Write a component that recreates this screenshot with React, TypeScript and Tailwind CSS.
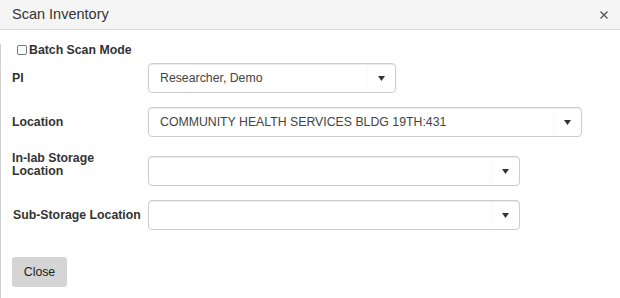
import React from "react";

function Select({ value, width }: { value?: string; width: string }) {
  return (
    <div
      className={`relative flex h-[30px] items-center rounded-[4px] border border-[#cccccc] bg-white shadow-[inset_0_1px_1px_rgba(0,0,0,0.08)] ${width}`}
    >
      <span className="pl-[11px] text-[12.3px] text-[#444]">{value}</span>
      <div className="absolute right-0 top-[2px] bottom-[2px] flex w-[28px] items-center justify-center border-l border-[#f9f9f9]">
        <svg width="7" height="5" viewBox="0 0 7 5">
          <path d="M0 0 L7 0 L3.5 5 Z" fill="#333" />
        </svg>
      </div>
    </div>
  );
}

export default function App() {
  return (
    <div
      className="w-[620px] h-[298px] overflow-hidden bg-white text-[#333]"
      style={{ fontFamily: '"Liberation Sans", Arial, sans-serif' }}
    >
      <div className="flex h-[30px] items-center justify-between border-b border-[#dcdcdc] bg-[#f5f5f5] pl-[12px] pr-[12px]">
        <span className="text-[14.5px] text-[#333]">Scan Inventory</span>
        <svg width="8" height="8" viewBox="0 0 8 8">
          <path d="M0.5 0.5 L7.5 7.5 M7.5 0.5 L0.5 7.5" stroke="#555" strokeWidth="1.3" />
        </svg>
      </div>
      <div className="h-[268px] border-l border-[#cfcfcf] pl-[11px]">
        <label className="mt-[14px] flex h-[12px] items-center pl-[5px] text-[12.3px] font-bold text-[#333]">
          <span className="mr-[2px] inline-block h-[10px] w-[10px] rounded-[2px] border border-[#777] bg-white" />
          Batch Scan Mode
        </label>
        <div className="mt-[7px] flex items-center">
          <div className="w-[136px] text-[12.3px] font-bold">PI</div>
          <Select value="Researcher, Demo" width="w-[248px]" />
        </div>
        <div className="mt-[14px] flex items-center">
          <div className="w-[136px] text-[12.3px] font-bold">Location</div>
          <Select value="COMMUNITY HEALTH SERVICES BLDG 19TH:431" width="w-[434px]" />
        </div>
        <div className="mt-[19px] flex items-start">
          <div className="-mt-[4px] w-[136px] text-[12.3px] font-bold leading-[13px]">
            In-lab Storage
            <br />
            Location
          </div>
          <Select width="w-[372px]" />
        </div>
        <div className="mt-[14px] flex items-center">
          <div className="w-[136px] pl-[1px] text-[12.3px] font-bold">Sub-Storage Location</div>
          <Select width="w-[372px]" />
        </div>
        <button className="mt-[27px] h-[30px] w-[55px] rounded-[3px] bg-[#d5d5d5] text-[12.3px] text-[#222]">
          Close
        </button>
      </div>
    </div>
  );
}
